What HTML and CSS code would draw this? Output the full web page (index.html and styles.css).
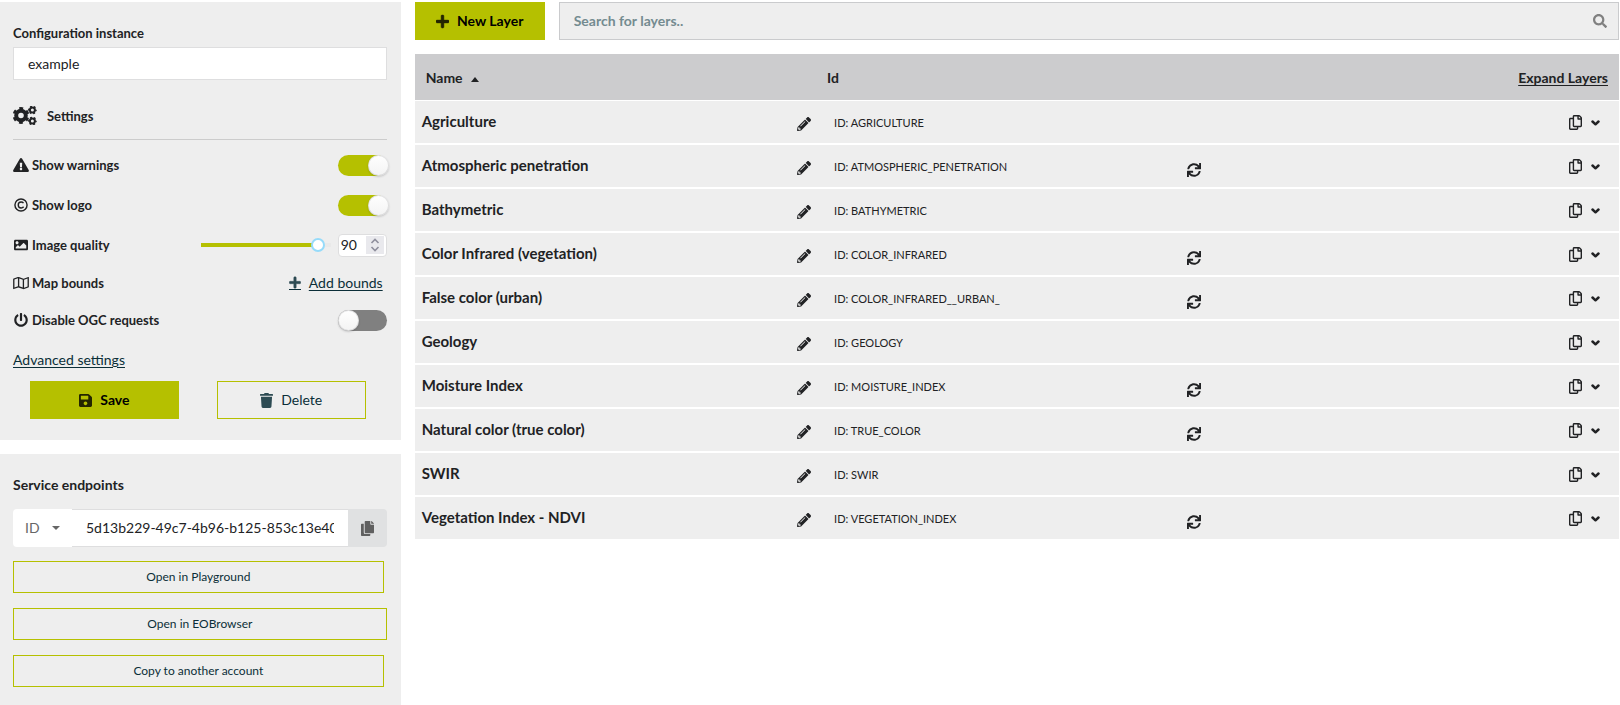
FILE: index.html
```
<!DOCTYPE html>
<html lang="en">
<head>
<meta charset="utf-8">
<title>Configuration</title>
<link rel="stylesheet" href="styles.css">
<script src="layers.js" defer></script>
</head>
<body>
<svg class="sprite" aria-hidden="true">
  <symbol id="i-plus" viewBox="0 0 448 512"><path stroke="currentColor" stroke-width="16" d="M416 208H272V64c0-17.67-14.33-32-32-32h-32c-17.67 0-32 14.33-32 32v144H32c-17.67 0-32 14.33-32 32v32c0 17.67 14.33 32 32 32h144v144c0 17.67 14.33 32 32 32h32c17.67 0 32-14.33 32-32V304h144c17.67 0 32-14.33 32-32v-32c0-17.67-14.33-32-32-32z"/></symbol>
  <symbol id="i-search" viewBox="0 0 512 512"><path d="M505 442.7L405.3 343c-4.5-4.5-10.6-7-17-7H372c27.6-35.3 44-79.7 44-128C416 93.1 322.9 0 208 0S0 93.1 0 208s93.1 208 208 208c48.3 0 92.7-16.4 128-44v16.3c0 6.4 2.5 12.5 7 17l99.7 99.7c9.4 9.4 24.6 9.4 33.9 0l28.3-28.3c9.4-9.4 9.4-24.6.1-34zM208 336c-70.7 0-128-57.2-128-128 0-70.7 57.2-128 128-128 70.7 0 128 57.2 128 128 0 70.7-57.2 128-128 128z"/></symbol>
  <symbol id="i-warning" viewBox="0 0 576 512"><path d="M569.517 440.013C587.975 472.007 564.806 512 527.94 512H48.054c-36.937 0-59.999-40.055-41.577-71.987L246.423 23.985c18.467-32.009 64.72-31.951 83.154 0l239.94 416.028zM288 354c-25.405 0-46 20.595-46 46s20.595 46 46 46 46-20.595 46-46-20.595-46-46-46zm-43.673-165.346l7.418 136c.347 6.364 5.609 11.346 11.982 11.346h48.546c6.373 0 11.635-4.982 11.982-11.346l7.418-136c.375-6.874-5.098-12.654-11.982-12.654h-63.383c-6.884 0-12.356 5.78-11.981 12.654z"/></symbol>
  <symbol id="i-copyright" viewBox="0 0 512 512"><g fill="none" stroke="currentColor" stroke-width="52"><circle cx="256" cy="256" r="222"/><path d="M352 320c-22 28-54 44-92 44-60 0-104-44-104-108s44-108 104-108c36 0 66 14 88 40"/></g></symbol>
  <symbol id="i-image" viewBox="0 0 512 512"><path d="M464 448H48c-26.51 0-48-21.49-48-48V112c0-26.51 21.49-48 48-48h416c26.51 0 48 21.49 48 48v288c0 26.51-21.49 48-48 48zM112 120c-30.928 0-56 25.072-56 56s25.072 56 56 56 56-25.072 56-56-25.072-56-56-56zM64 384h384V272l-87.515-87.515c-4.686-4.686-12.284-4.686-16.971 0L208 320l-55.515-55.515c-4.686-4.686-12.284-4.686-16.971 0L64 336v48z"/></symbol>
  <symbol id="i-map" viewBox="0 0 576 512"><path d="M560.02 32c-1.96 0-3.98.37-5.96 1.16L384.01 96H384L212 35.28A64.252 64.252 0 0 0 191.76 32c-6.69 0-13.37 1.05-19.81 3.14L20.12 87.95A32.006 32.006 0 0 0 0 117.66v346.32C0 473.17 7.53 480 15.99 480c1.96 0 3.97-.37 5.96-1.16L192 416l172 60.71a63.98 63.98 0 0 0 40.05.15l151.83-52.81A31.996 31.996 0 0 0 576 394.34V48.02c0-9.19-7.53-16.02-15.98-16.02zM224 90.42l128 45.19v285.97l-128-45.19V90.42zM48 418.05V129.07l128-44.53v286.2l-.64.23L48 418.05zm480-35.13l-128 44.53V141.26l.64-.24L528 93.95v288.97z"/></symbol>
  <symbol id="i-power" viewBox="0 0 512 512"><path d="M400 54.1c63 45 104 118.6 104 201.9 0 136.8-110.8 247.7-247.5 248C120 504.3 8.2 393 8 256.4 7.9 173.1 48.9 99.3 111.8 54.2c11.7-8.3 28-4.8 35 7.7L162.6 90c5.9 10.5 3.1 23.8-6.6 31-41.5 30.8-68 79.6-68 134.9-.1 92.3 74.5 168.1 168 168.1 91.6 0 168.6-74.2 168-169.1-.3-51.8-24.7-101.8-68.1-134-9.7-7.2-12.4-20.5-6.5-30.9l15.8-28.1c7-12.4 23.2-16.1 34.8-7.8zM296 264V24c0-13.3-10.7-24-24-24h-32c-13.3 0-24 10.7-24 24v240c0 13.3 10.7 24 24 24h32c13.3 0 24-10.7 24-24z"/></symbol>
  <symbol id="i-save" viewBox="0 0 448 512"><path d="M433.941 129.941l-83.882-83.882A48 48 0 0 0 316.118 32H48C21.49 32 0 53.49 0 80v352c0 26.51 21.49 48 48 48h352c26.51 0 48-21.49 48-48V163.882a48 48 0 0 0-14.059-33.941zM224 416c-35.346 0-64-28.654-64-64 0-35.346 28.654-64 64-64s64 28.654 64 64c0 35.346-28.654 64-64 64zm96-304.52V212c0 6.627-5.373 12-12 12H76c-6.627 0-12-5.373-12-12V108c0-6.627 5.373-12 12-12h228.52c3.183 0 6.235 1.264 8.485 3.515l3.48 3.48A11.996 11.996 0 0 1 320 111.48z"/></symbol>
  <symbol id="i-trash" viewBox="0 0 448 512"><path d="M432 32H312l-9.4-18.7A24 24 0 0 0 281.1 0H166.8a23.72 23.72 0 0 0-21.4 13.3L136 32H16A16 16 0 0 0 0 48v32a16 16 0 0 0 16 16h416a16 16 0 0 0 16-16V48a16 16 0 0 0-16-16zM53.2 467a48 48 0 0 0 47.9 45h245.8a48 48 0 0 0 47.9-45L416 128H32z"/></symbol>
  <symbol id="i-copy-solid" viewBox="0 0 448 512"><path d="M320 448v40c0 13.255-10.745 24-24 24H24c-13.255 0-24-10.745-24-24V120c0-13.255 10.745-24 24-24h72v296c0 30.879 25.121 56 56 56h168zm0-344V0H152c-13.255 0-24 10.745-24 24v368c0 13.255 10.745 24 24 24h272c13.255 0 24-10.745 24-24V128H344c-13.2 0-24-10.8-24-24zm120.971-31.029L375.029 7.029A24 24 0 0 0 358.059 0H352v96h96v-6.059a24 24 0 0 0-7.029-16.97z"/></symbol>
  <symbol id="i-copy" viewBox="0 0 448 512"><path d="M433.941 65.941l-51.882-51.882A48 48 0 0 0 348.118 0H176c-26.51 0-48 21.49-48 48v48H48c-26.51 0-48 21.49-48 48v320c0 26.51 21.49 48 48 48h224c26.51 0 48-21.49 48-48v-48h80c26.51 0 48-21.49 48-48V99.882a48 48 0 0 0-14.059-33.941zM266 464H54a6 6 0 0 1-6-6V150a6 6 0 0 1 6-6h74v224c0 26.51 21.49 48 48 48h96v42a6 6 0 0 1-6 6zm128-96H182a6 6 0 0 1-6-6V54a6 6 0 0 1 6-6h106v88c0 13.255 10.745 24 24 24h88v202a6 6 0 0 1-6 6zm6-256h-64V48h9.632c1.591 0 3.117.632 4.243 1.757l48.368 48.368a6 6 0 0 1 1.757 4.243V112z"/></symbol>
  <symbol id="i-pencil" viewBox="0 0 512 512"><path d="M497.9 142.1l-46.1 46.1c-4.7 4.7-12.3 4.7-17 0l-111-111c-4.7-4.7-4.7-12.3 0-17l46.1-46.1c18.7-18.7 49.1-18.7 67.9 0l60.1 60.1c18.8 18.7 18.8 49.1 0 67.9zM284.2 99.8L21.6 362.4.4 483.9c-2.9 16.4 11.4 30.6 27.8 27.8l121.5-21.3 262.6-262.6c4.7-4.7 4.7-12.3 0-17l-111-111c-4.8-4.7-12.4-4.7-17.1 0zM124.1 339.9c-5.5-5.5-5.5-14.3 0-19.8l154-154c5.5-5.5 14.3-5.5 19.8 0s5.5 14.3 0 19.8l-154 154c-5.5 5.5-14.3 5.5-19.8 0zM88 424h48v36.3l-64.5 11.3-31.1-31.1L51.7 376H88v48z"/></symbol>
  <symbol id="i-sync" viewBox="0 0 512 512"><path d="M440.65 12.57l4 82.77A247.16 247.16 0 0 0 255.83 8C134.73 8 33.91 94.92 12.29 209.82A12 12 0 0 0 24.09 224h49.05a12 12 0 0 0 11.67-9.26 175.91 175.91 0 0 1 317-56.94l-101.46-4.86a12 12 0 0 0-12.57 12v47.41a12 12 0 0 0 12 12H500a12 12 0 0 0 12-12V12a12 12 0 0 0-12-12h-47.37a12 12 0 0 0-11.98 12.57zM255.83 432a175.61 175.61 0 0 1-146-77.8l101.8 4.87a12 12 0 0 0 12.57-12v-47.4a12 12 0 0 0-12-12H12a12 12 0 0 0-12 12V500a12 12 0 0 0 12 12h47.35a12 12 0 0 0 12-12.6l-4.15-82.57A247.17 247.17 0 0 0 255.83 504c121.11 0 221.93-86.92 243.55-201.82a12 12 0 0 0-11.8-14.18h-49.05a12 12 0 0 0-11.67 9.26A175.86 175.86 0 0 1 255.83 432z"/></symbol>
  <symbol id="i-chevron" viewBox="0 0 9 6"><path d="M1.500 1.500 4.500 4.300 7.500 1.500" fill="none" stroke="currentColor" stroke-width="2.500" stroke-linecap="round" stroke-linejoin="round"/></symbol>
  <symbol id="i-caret-up" viewBox="0 0 8 5"><path d="M0 5 4 0l4 5z"/></symbol>
  <symbol id="i-caret-down" viewBox="0 0 8 4"><path d="M0 0h8L4 4z"/></symbol>
  <symbol id="i-spin" viewBox="0 0 18 18"><path d="M5.500 7 9 3.500 12.500 7M5.500 11 9 14.500 12.500 11" fill="none" stroke="currentColor" stroke-width="1.600"/></symbol>
  <symbol id="i-cogs" viewBox="0 0 24 19"><g fill="none" stroke="currentColor">
    <circle cx="8" cy="9.500" r="4.800" stroke-width="4"/><circle cx="8" cy="9.500" r="7.200" stroke-width="2.400" stroke-dasharray="3.770 3.770" stroke-dashoffset="1.885" transform="rotate(30 8 9.500)"/>
    <circle cx="19.400" cy="4" r="2.500" stroke-width="2"/><circle cx="19.400" cy="4" r="3.600" stroke-width="1.500" stroke-dasharray="1.885 1.885" stroke-dashoffset=".9"/>
    <circle cx="19.400" cy="15" r="2.500" stroke-width="2"/><circle cx="19.400" cy="15" r="3.600" stroke-width="1.500" stroke-dasharray="1.885 1.885" stroke-dashoffset=".9"/>
  </g></symbol>
</svg>

<div class="page">
  <aside class="sidebar">
    <form class="panel config">
      <label class="heading small" for="instance">Configuration instance</label>
      <input class="text-input" id="instance" type="text" value="example">
      <h2 class="settings-title"><svg class="cogs"><use href="#i-cogs"/></svg>Settings</h2>
      <div class="setting"><label for="warnings"><svg class="icon wide"><use href="#i-warning"/></svg>Show warnings</label><input class="toggle" id="warnings" type="checkbox" checked></div>
      <div class="setting"><label for="logo"><svg class="icon"><use href="#i-copyright"/></svg>Show logo</label><input class="toggle" id="logo" type="checkbox" checked></div>
      <div class="setting"><label for="quality"><svg class="icon"><use href="#i-image"/></svg>Image quality</label>
        <div class="quality">
          <input class="slider" type="range" min="0" max="100" value="90" aria-label="Image quality slider">
          <span class="number"><input id="quality" type="number" value="90"><svg class="spin"><use href="#i-spin"/></svg></span>
        </div>
      </div>
      <div class="setting short"><span class="setting-name"><svg class="icon wide"><use href="#i-map"/></svg>Map bounds</span><a class="add-bounds" href="#"><svg class="icon"><use href="#i-plus"/></svg>Add bounds</a></div>
      <div class="setting"><label for="ogc"><svg class="icon"><use href="#i-power"/></svg>Disable OGC requests</label><input class="toggle" id="ogc" type="checkbox"></div>
      <a class="advanced" href="#">Advanced settings</a>
      <div class="actions">
        <button class="button primary" type="button"><svg class="icon glyph"><use href="#i-save"/></svg>Save</button>
        <button class="button outline" type="button"><svg class="icon glyph"><use href="#i-trash"/></svg>Delete</button>
      </div>
    </form>
    <section class="panel endpoints">
      <h2 class="heading">Service endpoints</h2>
      <div class="endpoint">
        <span class="kind"><select aria-label="Endpoint type"><option>ID</option></select><svg class="caret"><use href="#i-caret-down"/></svg></span>
        <input class="endpoint-value" type="text" readonly aria-label="Endpoint value" value="5d13b229-49c7-4b96-b125-853c13e40">
        <button class="copy-button" type="button" aria-label="Copy"><svg class="icon glyph"><use href="#i-copy-solid"/></svg></button>
      </div>
      <button class="endpoint-link" type="button">Open in Playground</button>
      <button class="endpoint-link full" type="button">Open in EOBrowser</button>
      <button class="endpoint-link" type="button">Copy to another account</button>
    </section>
  </aside>

  <main class="layers">
    <div class="toolbar">
      <button class="button primary new-layer" type="button"><svg class="icon glyph"><use href="#i-plus"/></svg>New Layer</button>
      <div class="search"><input type="text" placeholder="Search for layers.." aria-label="Search for layers"><svg class="icon"><use href="#i-search"/></svg></div>
    </div>
    <table class="layer-table">
      <colgroup><col class="col-name"><col class="col-id"><col><col class="col-actions"></colgroup>
      <thead><tr><th scope="col">Name<svg class="sort"><use href="#i-caret-up"/></svg></th><th scope="col">Id</th><th></th><th class="expand"><a href="#">Expand Layers</a></th></tr></thead>
      <tbody id="rows"></tbody>
    </table>
  </main>
</div>
</body>
</html>
```
FILE: layers.js
```
const layers = [
  ["Agriculture", "AGRICULTURE", false],
  ["Atmospheric penetration", "ATMOSPHERIC_PENETRATION", true],
  ["Bathymetric", "BATHYMETRIC", false],
  ["Color Infrared (vegetation)", "COLOR_INFRARED", true],
  ["False color (urban)", "COLOR_INFRARED__URBAN_", true],
  ["Geology", "GEOLOGY", false],
  ["Moisture Index", "MOISTURE_INDEX", true],
  ["Natural color (true color)", "TRUE_COLOR", true],
  ["SWIR", "SWIR", false],
  ["Vegetation Index - NDVI", "VEGETATION_INDEX", true]
];

const iconButton = (icon, label, kind = "") =>
  `<button class="icon-button" type="button" aria-label="${label}"><svg class="icon ${kind}"><use href="#${icon}"/></svg></button>`;

document.getElementById("rows").innerHTML = layers.map(([name, id, sync]) => `
  <tr>
    <td><div class="name-cell"><span>${name}</span>${iconButton("i-pencil", "Edit " + name)}</div></td>
    <td class="id-cell">ID: ${id}</td>
    <td class="sync-cell">${sync ? iconButton("i-sync", "Refresh " + name) : ""}</td>
    <td><div class="row-actions">${iconButton("i-copy", "Copy " + name, "glyph")}${iconButton("i-chevron", "Expand " + name, "chevron")}</div></td>
  </tr>`).join("");
```
FILE: styles.css
```
* { box-sizing: border-box; }

body {
  margin: 0;
  background: #fff;
  color: #212224;
  font: 14px/20px Lato, "Liberation Sans", sans-serif;
}

button, input, select { font: inherit; color: inherit; margin: 0; }
button { cursor: pointer; }
a { color: #0b2e38; text-underline-offset: 2px; }
svg { fill: currentColor; display: block; flex: none; }
.sprite { position: absolute; width: 0; height: 0; }

.icon { width: 14px; height: 14px; }
.icon.wide { width: 16px; }
.icon.glyph { width: 13px; height: 15px; }
.icon.chevron { width: 9px; height: 6px; }

.page { display: flex; gap: 14px; padding: 2px 1px 0 0; align-items: flex-start; }
.sidebar { flex: none; width: 24.75%; display: grid; gap: 14px; }
.layers { flex: 1; min-width: 0; }
.panel { background: #eee; padding: 21px 14px 21px 13px; }

.heading { display: block; margin: 0; font-size: 14px; line-height: 20px; font-weight: 700; }
.heading.small { font-size: 13px; }

.text-input {
  display: block;
  width: 100%;
  height: 33px;
  margin-top: 4px;
  padding: 0 14px;
  border: 1px solid #dededf;
  background: #fff;
}

.settings-title {
  display: flex;
  align-items: center;
  gap: 10px;
  height: 60px;
  margin: 0 0 5px;
  padding-top: 12px;
  border-bottom: 1px solid #ccc;
  font-size: 13px;
  font-weight: 700;
}
.cogs { width: 24px; height: 19px; }

.setting { display: flex; align-items: center; justify-content: space-between; height: 40px; }
.setting.short { height: 35px; }
.setting label, .setting-name { display: flex; align-items: center; gap: 3px; font-size: 13px; font-weight: 700; }
.setting label .icon, .setting-name .icon { width: 16px; }

.toggle {
  appearance: none;
  width: 49px;
  height: 21px;
  border-radius: 11px;
  background: #808080;
  cursor: pointer;
}
.toggle::before {
  content: "";
  display: block;
  width: 21px;
  height: 21px;
  border-radius: 50%;
  background: linear-gradient(#fff, #f3f3f3);
  box-shadow: 0 1px 2px rgba(34, 36, 38, .2), inset 0 0 0 1px rgba(34, 36, 38, .12);
}
.toggle:checked { background: #b5c000; }
.toggle:checked::before { margin-left: 30px; }

.quality { display: flex; align-items: center; }
.slider {
  appearance: none;
  width: 144px;
  height: 14px;
  background: linear-gradient(to right, transparent 7px, #b5c000 7px 124px, #e9e9e9 124px 137px, transparent 137px) center / 100% 4px no-repeat;
}
.slider::-webkit-slider-thumb {
  appearance: none;
  width: 14px;
  height: 14px;
  border: 2px solid #96dbfa;
  border-radius: 50%;
  background: #fff;
}
.number {
  display: flex;
  align-items: center;
  width: 49px;
  height: 23px;
  padding-right: 2px;
  border: 1px solid #dededf;
  border-radius: 4px;
  background: #fff;
}
.number input {
  appearance: textfield;
  flex: 1;
  min-width: 0;
  border: 0;
  padding: 0 0 0 2px;
  background: none;
}
.number input::-webkit-inner-spin-button { display: none; }
.spin { width: 18px; height: 18px; background: #e9e9ed; color: #8f8f9d; }

.add-bounds { display: flex; align-items: center; gap: 8px; margin-right: 4px; }
.add-bounds .icon, .outline .icon { color: #2d4b53; }
.add-bounds .icon { width: 12px; border-bottom: 1px solid #0b2e38; }
.advanced { display: block; width: max-content; line-height: 20px; margin: 10px 0 11px; }

.actions { display: grid; grid-template-columns: 1fr 1fr; gap: 38px; padding: 0 21px 0 17px; }
.button {
  display: flex;
  align-items: center;
  justify-content: center;
  gap: 8px;
  height: 38px;
  padding: 0 20px;
  border: 0;
}
.primary { background: #b5c000; color: #000; font-weight: 700; }
.primary .icon { color: #242600; }
.outline { border: 1px solid #b5c000; background: none; color: #0b2e38; }

.endpoints { padding-bottom: 18px; }
.endpoint { display: flex; height: 38px; margin: 14px 0; }
.kind { position: relative; display: flex; width: 59px; }
.kind select {
  appearance: none;
  width: 100%;
  padding: 0 12px;
  border: 0;
  border-radius: 4px 0 0 4px;
  background: #fff;
  color: #666;
}
.caret { position: absolute; right: 12px; top: 17px; width: 8px; height: 4px; color: #666; pointer-events: none; }
.endpoint-value {
  flex: 1;
  min-width: 0;
  padding: 0 14px;
  border: 1px solid #dededf;
  border-width: 1px 0;
  background: #fff;
}
.copy-button {
  display: grid;
  place-items: center;
  width: 39px;
  border: 0;
  border-radius: 0 4px 4px 0;
  background: #e0e1e2;
  color: #606060;
}
.endpoint-link {
  display: block;
  width: calc(100% - 3px);
  height: 32px;
  margin-bottom: 15px;
  padding: 0;
  border: 1px solid #b5c000;
  background: none;
  color: #0b2e38;
  font-size: 12px;
}
.endpoint-link.full { width: 100%; }
.endpoint-link:last-child { margin-bottom: 0; }

.toolbar { display: flex; gap: 14px; margin-bottom: 14px; }
.new-layer { width: 130px; }
.search {
  display: flex;
  align-items: center;
  flex: 1;
  padding: 0 11px 0 14px;
  border: 1px solid #cacbcd;
  background: #eee;
  color: #808080;
}
.search input { flex: 1; min-width: 0; padding: 0; border: 0; background: none; color: #212224; font-weight: 700; }
.search input::placeholder { color: #748b90; opacity: 1; }

.layer-table { width: 100%; border-collapse: separate; border-spacing: 0; table-layout: fixed; }
.col-name { width: 33%; }
.col-id { width: 30%; }
.col-actions { width: 12%; }
.layer-table th { height: 47px; padding: 2px 11px 0; border-bottom: 1px solid #fff; background: #ccccce; text-align: left; font-weight: 700; }
.layer-table th:nth-child(2) { padding-left: 15px; }
.layer-table .expand { text-align: right; }
.expand a { color: #212224; }
.sort { display: inline-block; width: 8px; height: 5px; margin-left: 8px; vertical-align: middle; }
.layer-table td { height: 44px; padding: 0 7px; border-bottom: 2px solid #fff; background: #eee; }

.icon-button { display: block; padding: 0; border: 0; background: none; }
.layer-table td:first-child { padding: 0 1px 2px 7px; }
.name-cell { display: flex; align-items: center; justify-content: space-between; font-size: 15px; font-weight: 700; }
.name-cell .icon-button { padding-top: 6px; }
.layer-table .id-cell { padding: 2px 0 0 22px; font-size: 11px; }
.layer-table .sync-cell { padding: 8px 0 0 14px; }
.row-actions { display: flex; align-items: center; justify-content: flex-end; gap: 9px; padding: 1px 12px 0 0; }
```
